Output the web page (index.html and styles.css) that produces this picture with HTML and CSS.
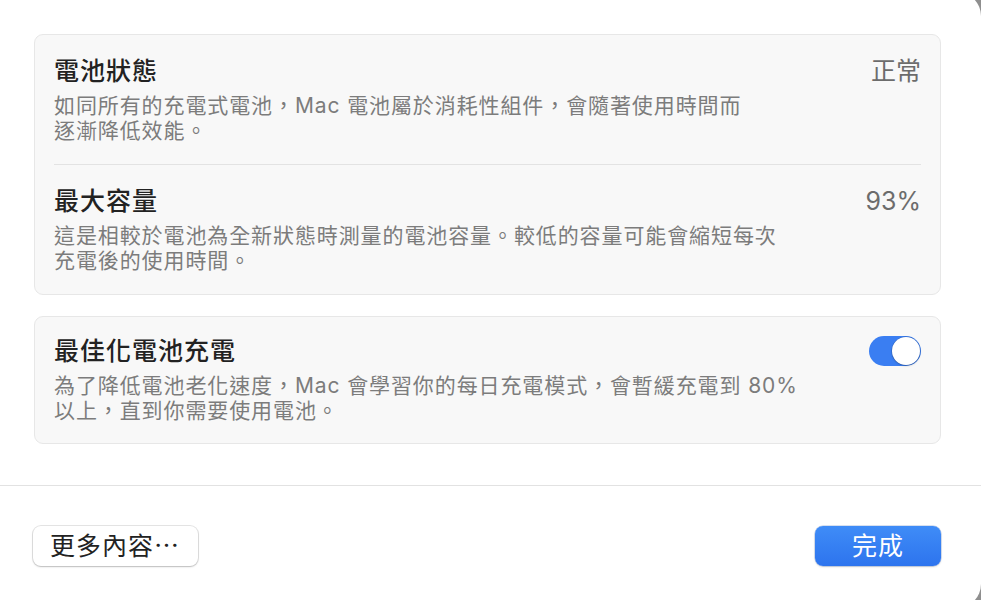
FILE: index.html
```html
<!DOCTYPE html>
<html lang="zh-Hant">
<head>
<meta charset="utf-8">
<title>電池</title>
<link rel="stylesheet" href="styles.css">
</head>
<body>
<div class="window">
  <div class="content">
    <section class="card">
      <div class="row">
        <div class="text">
          <div class="title">電池狀態</div>
          <div class="desc">如同所有的充電式電池，Mac 電池屬於消耗性組件，會隨著使用時間而<br>逐漸降低效能。</div>
        </div>
        <div class="value">正常</div>
      </div>
      <div class="sep"></div>
      <div class="row">
        <div class="text">
          <div class="title">最大容量</div>
          <div class="desc">這是相較於電池為全新狀態時測量的電池容量。較低的容量可能會縮短每次<br>充電後的使用時間。</div>
        </div>
        <div class="value">93%</div>
      </div>
    </section>
    <section class="card card-gap">
      <div class="row row-tight">
        <div class="text">
          <div class="title">最佳化電池充電</div>
          <div class="desc">為了降低電池老化速度，Mac 會學習你的每日充電模式，會暫緩充電到 80%<br>以上，直到你需要使用電池。</div>
        </div>
        <div class="toggle"><span class="knob"></span></div>
      </div>
    </section>
  </div>
  <div class="footer">
    <button class="btn">更多內容⋯</button>
    <button class="btn btn-primary">完成</button>
  </div>
</div>
</body>
</html>
```

FILE: styles.css
```css
html, body {
  margin: 0;
  padding: 0;
  height: 100%;
  background: #8f8f8f;
  overflow: hidden;
}
body {
  font-family: "Inter", "Noto Sans CJK TC", sans-serif;
  color: #262626;
}
.window {
  margin-top: -8px;
  height: 616px;
  background: #ffffff;
  border-radius: 0 24px 24px 0;
  display: flex;
  flex-direction: column;
}
.content {
  padding: 42px 40px 0 34px;
}
.card {
  background: #f8f8f8;
  border: 1px solid #e7e7e7;
  border-radius: 9px;
  padding: 0 19px;
}
.card-gap {
  margin-top: 21px;
}
.row {
  display: flex;
  justify-content: space-between;
  align-items: flex-start;
  padding: 20px 0 21px;
}
.row-tight {
  padding: 18px 0 20px;
}
.sep {
  height: 1px;
  background: #e3e3e3;
}
.title {
  font-size: 25px;
  letter-spacing: 1px;
  line-height: 32px;
  font-weight: 500;
  color: #222222;
}
.desc {
  margin-top: 6px;
  font-size: 21px;
  letter-spacing: 0.9px;
  line-height: 25px;
  color: #7c7c7c;
}
.value {
  font-size: 25px;
  line-height: 32px;
  color: #6c6c6c;
}
.toggle {
  margin-top: 1px;
  width: 52px;
  height: 30px;
  border-radius: 15px;
  background: #3a7ef2;
  display: flex;
  justify-content: flex-end;
  align-items: center;
  padding: 0 1px;
  box-sizing: border-box;
}
.knob {
  width: 28px;
  height: 28px;
  border-radius: 50%;
  background: #ffffff;
  box-shadow: 0 0 0 0.5px rgba(0,0,0,0.2), 0 1px 2px rgba(0,0,0,0.2);
}
.footer {
  margin-top: 41px;
  border-top: 1px solid #e2e2e2;
  padding: 40px 40px 0 33px;
  display: flex;
  justify-content: space-between;
}
.btn {
  font-family: "Inter", "Noto Sans CJK TC", sans-serif;
  height: 40px;
  font-size: 25px;
  letter-spacing: 1px;
  line-height: 40px;
  padding: 0 18px 0 17px;
  border: none;
  border-radius: 8px;
  background: #ffffff;
  color: #222222;
  box-shadow: 0 0 0 1px rgba(0,0,0,0.1), 0 1px 2px rgba(0,0,0,0.18);
}
.btn-primary {
  width: 126px;
  padding: 0;
  text-align: center;
  color: #ffffff;
  background: linear-gradient(#3f8cf7, #2d74ee);
  box-shadow: 0 0 0 0.5px rgba(0,60,160,0.3), 0 1px 2px rgba(0,0,0,0.15);
}
```
